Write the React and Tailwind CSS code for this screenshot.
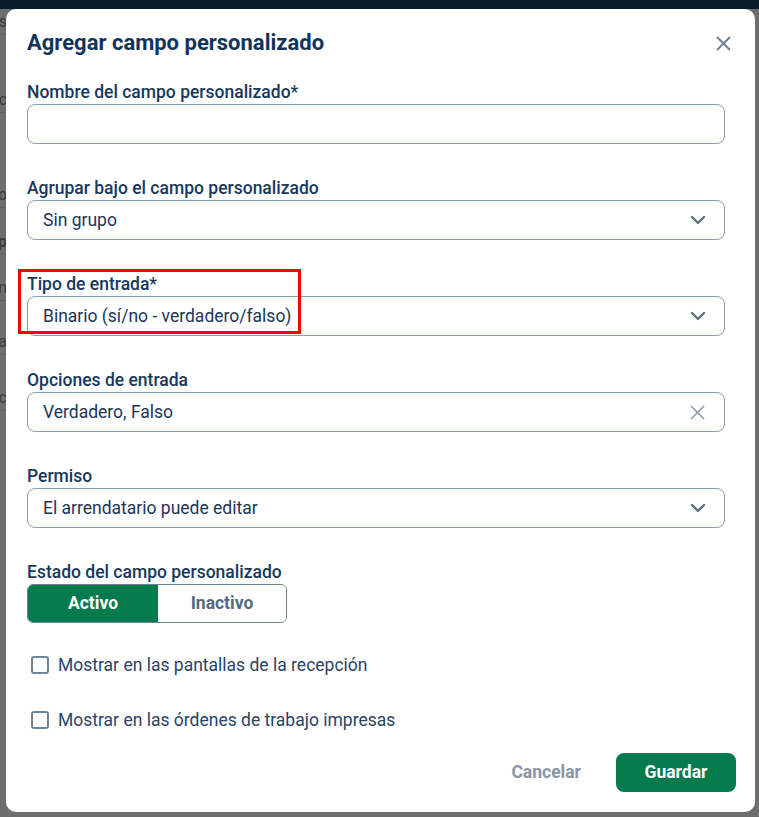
import { ChevronDown } from 'lucide-react'

const ghostRows = [
  { top: 'h-[26px]', text: 's' },
  { top: 'h-[78px]', text: 'c' },
  { top: 'h-[95px]', text: 'o' },
  { top: 'h-[47px]', text: 'p', bold: true },
  { top: 'h-[46px]', text: 'n' },
  { top: 'h-[54px]', text: 'a' },
  { top: 'h-[56px]', text: 'ec' },
]

function Label({ children }) {
  return (
    <div className="h-6 text-[17.5px] leading-6 font-medium text-[#17395d]">{children}</div>
  )
}

function SelectBox({ value }) {
  return (
    <div className="h-10 rounded-lg border border-[#8c9bb0] bg-white flex items-center pl-[15px] pr-[14px]">
      <span className="flex-1 text-[17.5px] text-[#1b3658]">{value}</span>
      <ChevronDown size={24} strokeWidth={2.4} className="text-[#5b6f85]" />
    </div>
  )
}

function Checkbox({ label }) {
  return (
    <label className="h-6 flex items-center gap-[9px] pl-1 text-[17.5px] text-[#2a4464]">
      <span className="w-[18px] h-[18px] rounded-[3px] border-2 border-[#6f8397] bg-white" />
      {label}
    </label>
  )
}

export default function App() {
  return (
    <div
      className="relative w-[759px] h-[817px] overflow-hidden bg-[#6e6e6e]"
      style={{ fontFamily: 'Roboto, "Noto Sans", Arial, sans-serif' }}
    >
      {/* page behind the overlay */}
      <div className="h-[9px] bg-[#081a2b]" />
      <div className="w-[7px] overflow-hidden flex flex-col text-[16px] text-[#3d3d3d] leading-6">
        {ghostRows.map((r, i) => (
          <div key={i} className={`${r.top} flex items-end justify-end border-b border-[#626262] ${r.bold ? 'font-bold' : ''}`}>
            <span className="whitespace-nowrap">{r.text}</span>
          </div>
        ))}
      </div>

      {/* Modal */}
      <div className="absolute left-[6px] top-[9px] w-[749px] h-[803px] bg-white rounded-[10px] pt-5 pl-[21px] pr-[30px] flex flex-col">
        <div className="h-7 flex items-center">
          <h2 className="flex-1 text-[22px] leading-7 font-bold text-[#11345a]">Agregar campo personalizado</h2>
          <button aria-label="Close" className="w-6 h-6 flex items-center justify-center -mr-[10px] text-[#6e8296]">
            <svg width="15" height="15" viewBox="0 0 15 15" fill="none">
              <line x1="1" y1="1" x2="14" y2="14" stroke="currentColor" strokeWidth="1.9" />
              <line x1="14" y1="1" x2="1" y2="14" stroke="currentColor" strokeWidth="1.9" />
            </svg>
          </button>
        </div>

        <div className="mt-[23px] flex flex-col">
          <Label>Nombre del campo personalizado*</Label>
          <input className="h-10 rounded-lg border border-[#8c9bb0] px-[15px] text-[17.5px] outline-none" readOnly />
        </div>

        <div className="mt-8 flex flex-col">
          <Label>Agrupar bajo el campo personalizado</Label>
          <SelectBox value="Sin grupo" />
        </div>

        <div className="relative mt-8 flex flex-col">
          <Label>Tipo de entrada*</Label>
          <SelectBox value="Binario (sí/no - verdadero/falso)" />
          <div className="absolute -left-[9px] -top-[3px] w-[283px] h-[65px] border-[3px] border-[#ff0000] pointer-events-none" />
        </div>

        <div className="mt-8 flex flex-col">
          <Label>Opciones de entrada</Label>
          <div className="h-10 rounded-lg border border-[#8c9bb0] flex items-center pl-[15px] pr-[19px]">
            <span className="flex-1 text-[17.5px] text-[#1b3658]">Verdadero, Falso</span>
            <svg width="15" height="15" viewBox="0 0 15 15" fill="none" className="text-[#8e9cae]">
              <line x1="1" y1="1" x2="14" y2="14" stroke="currentColor" strokeWidth="1.6" />
              <line x1="14" y1="1" x2="1" y2="14" stroke="currentColor" strokeWidth="1.6" />
            </svg>
          </div>
        </div>

        <div className="mt-8 flex flex-col">
          <Label>Permiso</Label>
          <SelectBox value="El arrendatario puede editar" />
        </div>

        <div className="mt-8 flex flex-col">
          <Label>Estado del campo personalizado</Label>
          <div className="flex w-[260px] h-[39px] rounded-md border border-[#6f8397] overflow-hidden">
            <button className="w-[130px] bg-[#047a4d] text-white font-bold text-[17.5px]">Activo</button>
            <button className="flex-1 bg-white text-[#536a83] font-bold text-[17.5px]">Inactivo</button>
          </div>
        </div>

        <div className="mt-[30px] flex flex-col gap-[31px]">
          <Checkbox label="Mostrar en las pantallas de la recepción" />
          <Checkbox label="Mostrar en las órdenes de trabajo impresas" />
        </div>

        <div className="mt-[21px] flex justify-end items-center gap-[19px] -mr-[11px]">
          <button className="h-[39px] px-4 text-[17.5px] font-bold text-[#8a96a4]">Cancelar</button>
          <button className="h-[39px] w-[120px] rounded-lg bg-[#047a4d] text-white text-[17.5px] font-bold">Guardar</button>
        </div>
      </div>
    </div>
  )
}
